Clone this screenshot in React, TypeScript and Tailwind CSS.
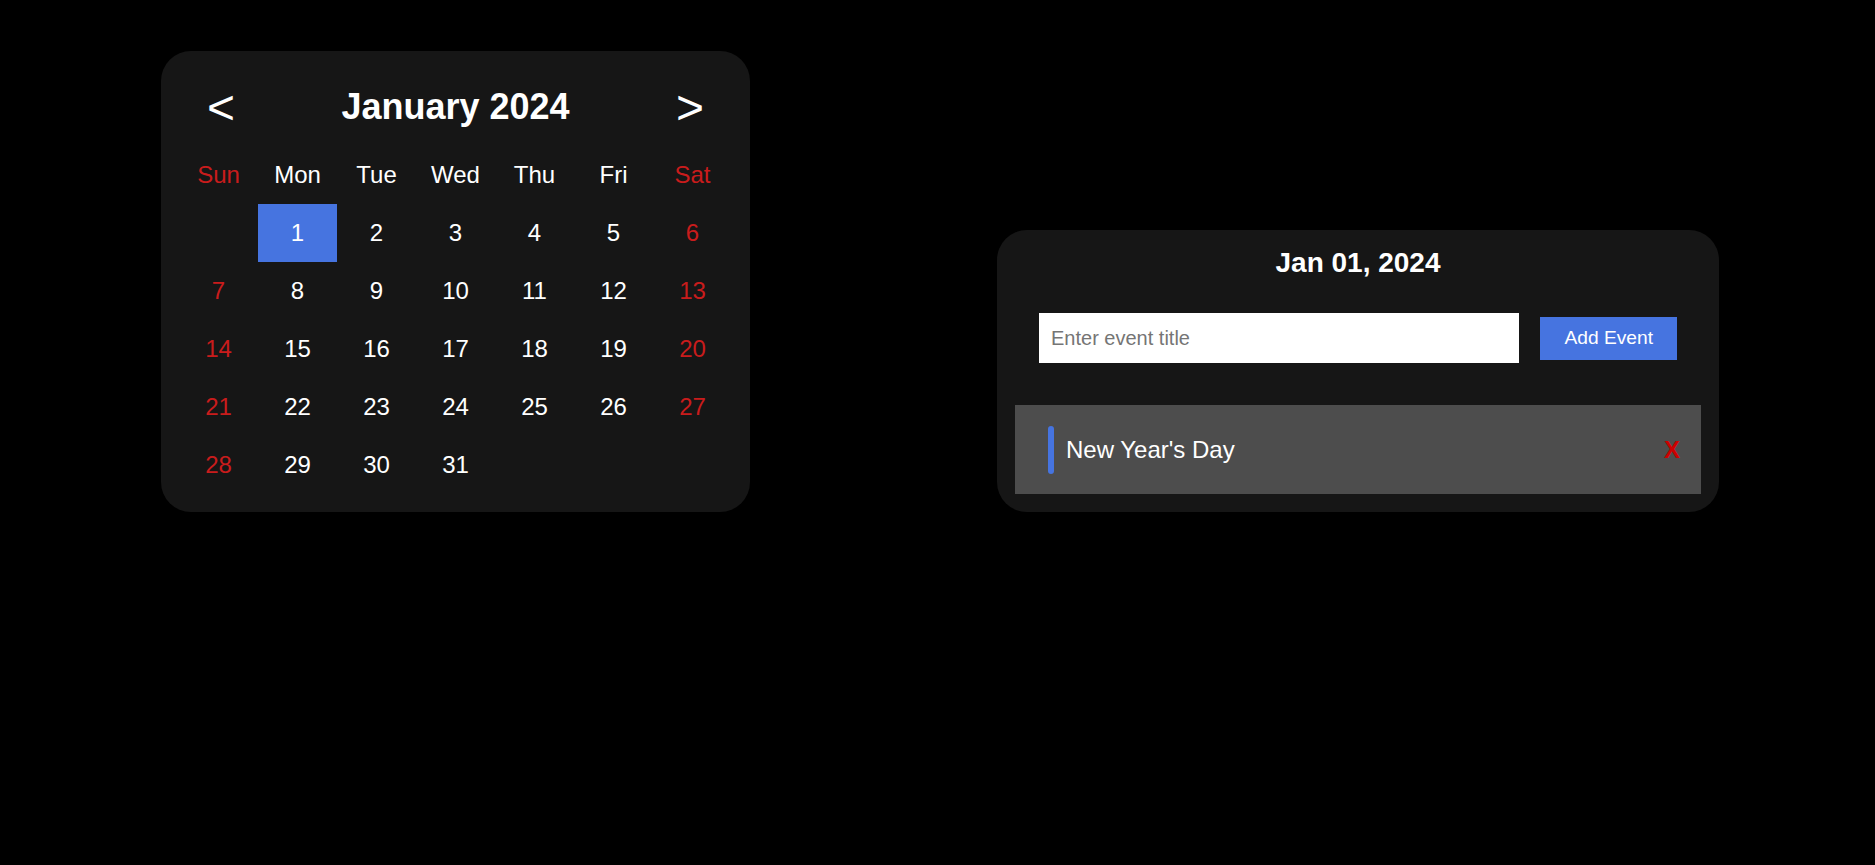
import { useState } from 'react';

interface CalendarEvent {
  id: number;
  date: string;
  title: string;
}

const MONTHS = [
  'January', 'February', 'March', 'April', 'May', 'June',
  'July', 'August', 'September', 'October', 'November', 'December'
];
const SHORT_MONTHS = ['Jan', 'Feb', 'Mar', 'Apr', 'May', 'Jun', 'Jul', 'Aug', 'Sep', 'Oct', 'Nov', 'Dec'];
const WEEKDAYS = ['Sun', 'Mon', 'Tue', 'Wed', 'Thu', 'Fri', 'Sat'];

const pad = (n: number) => String(n).padStart(2, '0');

interface CalendarProps {
  year: number;
  month: number;
  selectedDay: number;
  onSelect: (day: number) => void;
  onPrev: () => void;
  onNext: () => void;
}

const Calendar = ({ year, month, selectedDay, onSelect, onPrev, onNext }: CalendarProps) => {
  const firstWeekday = new Date(year, month, 1).getDay();
  const daysInMonth = new Date(year, month + 1, 0).getDate();

  // Celdas vacías antes del primer día
  const cells: (number | null)[] = [];
  for (let i = 0; i < firstWeekday; i++) cells.push(null);
  for (let d = 1; d <= daysInMonth; d++) cells.push(d);

  const isWeekend = (index: number) => index % 7 === 0 || index % 7 === 6;

  return (
    <div className="w-[589px] rounded-[30px] bg-[#161616] p-[18px]">
      <div className="flex h-[77px] items-center justify-between">
        <button onClick={onPrev} className="w-[84px] text-center text-[48px] leading-none text-white">
          &lt;
        </button>
        <h2 className="-mt-[2px] text-[36px] font-bold text-white">
          {MONTHS[month]} {year}
        </h2>
        <button onClick={onNext} className="w-[84px] text-center text-[48px] leading-none text-white">
          &gt;
        </button>
      </div>

      <div className="grid grid-cols-7">
        {WEEKDAYS.map((name, i) => (
          <div
            key={name}
            className={`flex h-[58px] items-center justify-center text-[24px] ${isWeekend(i) ? 'text-[#c91c1c]' : 'text-white'}`}
          >
            {name}
          </div>
        ))}
        {cells.map((day, i) => (
          <div
            key={i}
            onClick={() => day && onSelect(day)}
            className={`flex h-[58px] cursor-pointer items-center justify-center text-[24px] ${
              day === selectedDay ? 'bg-[#4674e0] text-white' : isWeekend(i) ? 'text-[#c91c1c]' : 'text-white'
            }`}
          >
            {day ?? ''}
          </div>
        ))}
      </div>
    </div>
  );
};

interface EventPanelProps {
  dateLabel: string;
  events: CalendarEvent[];
  onAdd: (title: string) => void;
  onRemove: (id: number) => void;
}

const EventPanel = ({ dateLabel, events, onAdd, onRemove }: EventPanelProps) => {
  const [title, setTitle] = useState('');

  const handleAdd = () => {
    if (!title.trim()) return;
    onAdd(title.trim());
    setTitle('');
  };

  return (
    <div className="w-[722px] rounded-[30px] bg-[#161616] px-[18px] pt-[17px] pb-[18px]">
      <h3 className="text-center text-[28px] leading-[normal] font-bold text-white">{dateLabel}</h3>

      <div className="mt-[34px] flex items-center gap-[21px] px-[24px]">
        <input
          value={title}
          onChange={(e) => setTitle(e.target.value)}
          placeholder="Enter event title"
          className="h-[50px] flex-1 bg-white px-3 text-[20px] text-black outline-none placeholder:text-[#757575]"
        />
        <button onClick={handleAdd} className="h-[43px] bg-[#4674e0] px-6 text-[19.2px] text-white">
          Add Event
        </button>
      </div>

      <div className="mt-[42px] flex flex-col gap-3">
        {events.map((ev) => (
          <div key={ev.id} className="flex h-[89px] items-center bg-[#4d4d4d] pr-[21px] pl-[33px]">
            <span className="h-[48px] w-[6px] rounded-full bg-[#4674e0]" />
            <span className="ml-3 flex-1 text-[24px] text-white">{ev.title}</span>
            <button onClick={() => onRemove(ev.id)} className="text-[24px] font-bold text-[#cc0000]">
              X
            </button>
          </div>
        ))}
      </div>
    </div>
  );
};

export default function App() {
  const [year, setYear] = useState(2024);
  const [month, setMonth] = useState(0);
  const [selectedDay, setSelectedDay] = useState(1);
  const [events, setEvents] = useState<CalendarEvent[]>([
    { id: 1, date: '2024-01-01', title: "New Year's Day" }
  ]);

  const dateKey = `${year}-${pad(month + 1)}-${pad(selectedDay)}`;
  const dateLabel = `${SHORT_MONTHS[month]} ${pad(selectedDay)}, ${year}`;

  const goPrev = () => {
    if (month === 0) {
      setMonth(11);
      setYear(year - 1);
    } else setMonth(month - 1);
  };

  const goNext = () => {
    if (month === 11) {
      setMonth(0);
      setYear(year + 1);
    } else setMonth(month + 1);
  };

  return (
    <div className="min-h-screen bg-black font-['Liberation_Sans',Arial,sans-serif]">
      <div className="flex items-end gap-[247px] pt-[51px] pl-[161px]">
        <Calendar
          year={year}
          month={month}
          selectedDay={selectedDay}
          onSelect={setSelectedDay}
          onPrev={goPrev}
          onNext={goNext}
        />
        <EventPanel
          dateLabel={dateLabel}
          events={events.filter((e) => e.date === dateKey)}
          onAdd={(title) => setEvents([...events, { id: Date.now(), date: dateKey, title }])}
          onRemove={(id) => setEvents(events.filter((e) => e.id !== id))}
        />
      </div>
    </div>
  );
}
